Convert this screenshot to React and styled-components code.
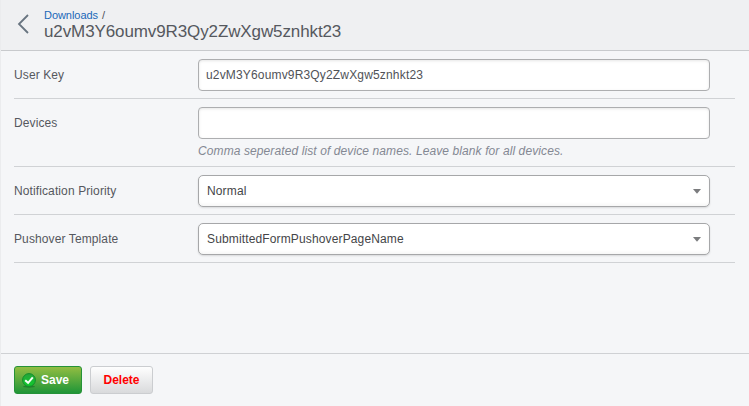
import React from "react";
import styled, { createGlobalStyle } from "styled-components";

const GlobalStyle = createGlobalStyle`
  *, *::before, *::after { box-sizing: border-box; }
  body {
    margin: 0;
    background: #f5f6f8;
    color: #55585e;
    font: 12px/16px "Liberation Sans", Arial, sans-serif;
  }
`;

const Page = styled.div`
  display: flex;
  flex-direction: column;
  height: 406px;
  border-left: 1px solid #ebecee;
  background: #f5f6f8;
`;

const Header = styled.header`
  display: flex;
  height: 51px;
  padding-left: 16px;
  background: #eff0f2;
  border-bottom: 1px solid #c8cacd;
`;

const BackButton = styled.button`
  display: flex;
  align-items: flex-start;
  width: 27px;
  padding: 14px 0 0;
  border: 0;
  background: none;
`;

const Heading = styled.div`
  padding-top: 9px;
`;

const Breadcrumb = styled.nav`
  font-size: 11px;
  line-height: 13px;
  color: #50535a;
  letter-spacing: -0.05px;
  a { color: #1a68b8; text-decoration: none; margin-right: 4px; }
`;

const Title = styled.h1`
  margin: 0;
  font-size: 17px;
  line-height: 20px;
  font-weight: normal;
  letter-spacing: -0.11px;
`;

const Form = styled.form`
  flex: 1;
  padding: 0 14px 0 13px;
`;

const Row = styled.div`
  display: grid;
  grid-template-columns: 184px 512px;
  min-height: 48px;
  padding: 8px 0 7px;
  border-bottom: 1px solid #d0d2d5;
`;

const Label = styled.label`
  padding-top: 8px;
  letter-spacing: 0.11px;
`;

const TextInput = styled.input`
  display: block;
  width: 512px;
  height: 32px;
  padding: 0 7px;
  border: 1px solid #adaeb0;
  border-radius: 4px;
  background: #fff;
  box-shadow: inset 0 1px 3px rgba(0, 0, 0, 0.1);
  color: #505257;
  font: inherit;
  letter-spacing: 0.165px;
  outline: none;
`;

const Hint = styled.p`
  margin: 4px 0 0;
  color: #848893;
  font-style: italic;
  line-height: 16px;
  letter-spacing: 0.1px;
`;

const SelectBox = styled.div`
  display: flex;
  align-items: center;
  justify-content: space-between;
  width: 512px;
  height: 32px;
  padding: 0 8px;
  border: 1px solid #a6a7a9;
  border-radius: 5px;
  background: #fff;
  box-shadow: 0 1px 2px rgba(0, 0, 0, 0.12), inset 0 -2px 3px rgba(0, 0, 0, 0.035);
  color: #444548;
  letter-spacing: 0.14px;
`;

const Footer = styled.footer`
  display: flex;
  gap: 8px;
  height: 53px;
  padding: 12px 0 0 13px;
  border-top: 1px solid #cfd1d4;
`;

const Button = styled.button`
  display: flex;
  align-items: center;
  justify-content: center;
  gap: 5px;
  width: ${({ $primary }) => ($primary ? 68 : 63)}px;
  height: 28px;
  padding: 0 ${({ $primary }) => ($primary ? 5 : 0)}px 0 0;
  border: 1px solid ${({ $primary }) => ($primary ? "#259238" : "#cbcdd0")};
  border-radius: 3px;
  background: ${({ $primary }) =>
    $primary
      ? "linear-gradient(#92bd42, #1f9638)"
      : "linear-gradient(#fefefe, #d9dadc)"};
  color: ${({ $primary }) => ($primary ? "#fff" : "#f00")};
  font: bold 12px/16px "Liberation Sans", Arial, sans-serif;
`;

const BackIcon = () => (
  <svg width="14" height="20" viewBox="0 0 14 20">
    <path d="M11 1 L2 10 L11 19" fill="none" stroke="#687480" strokeWidth="1.8" />
  </svg>
);

const CaretIcon = () => (
  <svg width="8" height="5" viewBox="0 0 8 5">
    <path d="M0 0 H8 L4 4.8 Z" fill="#7b7c7e" />
  </svg>
);

const CheckIcon = () => (
  <svg width="14" height="15" viewBox="0 0 14 15">
    <defs>
      <linearGradient id="disc" x1="0" y1="0" x2="0" y2="1">
        <stop offset="0" stopColor="#25a53b" />
        <stop offset="1" stopColor="#10cc2c" />
      </linearGradient>
    </defs>
    <ellipse cx="7" cy="13.5" rx="6" ry="1.2" fill="#176e27" opacity="0.65" />
    <circle cx="7" cy="7" r="6.4" fill="url(#disc)" stroke="#128c2b" />
    <path d="M3.2 7.2 L6.1 9.8 L10.8 4.3" fill="none" stroke="#f6fff6" strokeWidth="2" />
  </svg>
);

const Select = ({ value }) => (
  <SelectBox role="combobox" tabIndex={0}>
    <span>{value}</span>
    <CaretIcon />
  </SelectBox>
);

const Field = ({ label, hint, children }) => (
  <Row>
    <Label>{label}</Label>
    <div>
      {children}
      {hint && <Hint>{hint}</Hint>}
    </div>
  </Row>
);

const USER_KEY = "u2vM3Y6oumv9R3Qy2ZwXgw5znhkt23";

export default function App() {
  return (
    <>
      <GlobalStyle />
      <Page>
        <Header>
          <BackButton type="button" aria-label="Back"><BackIcon /></BackButton>
          <Heading>
            <Breadcrumb><a href="#downloads">Downloads</a>/</Breadcrumb>
            <Title>{USER_KEY}</Title>
          </Heading>
        </Header>
        <Form>
          <Field label="User Key"><TextInput defaultValue={USER_KEY} /></Field>
          <Field
            label="Devices"
            hint="Comma seperated list of device names. Leave blank for all devices."
          >
            <TextInput />
          </Field>
          <Field label="Notification Priority"><Select value="Normal" /></Field>
          <Field label="Pushover Template"><Select value="SubmittedFormPushoverPageName" /></Field>
        </Form>
        <Footer>
          <Button type="button" $primary><CheckIcon />Save</Button>
          <Button type="button">Delete</Button>
        </Footer>
      </Page>
    </>
  );
}
